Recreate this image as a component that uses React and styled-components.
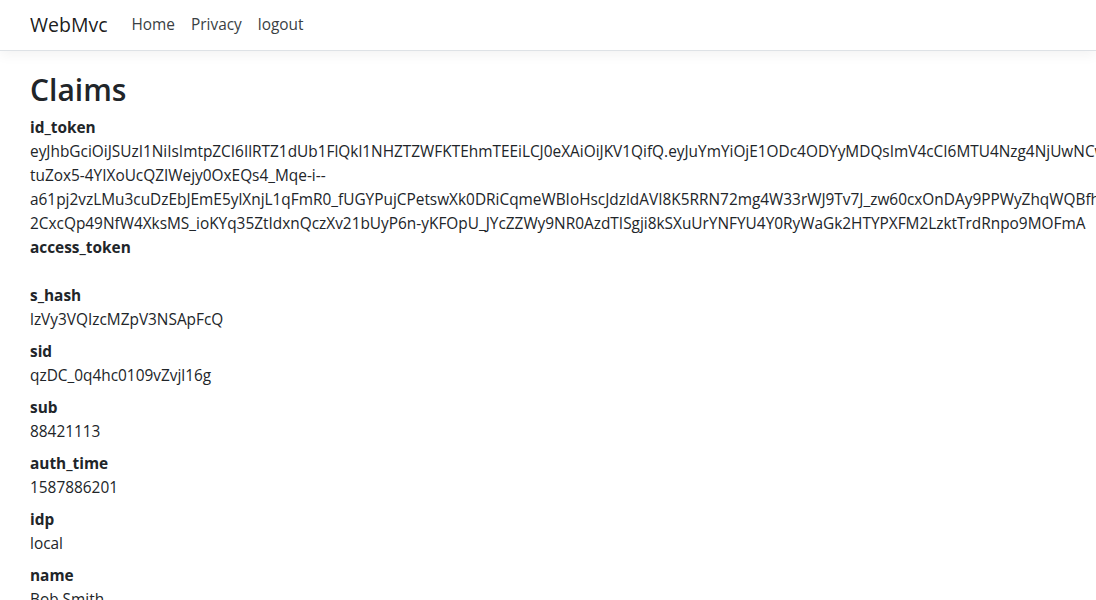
import styled, { createGlobalStyle } from "styled-components"

const GlobalStyle = createGlobalStyle`
  html, body {
    margin: 0;
    overflow: hidden;
    background: #fff;
  }
  body {
    font-family: "Open Sans", "Noto Sans", sans-serif;
    font-size: 15.4px;
    line-height: 24px;
    color: #212529;
  }
`

const claims = [
  {
    type: "id_token",
    lines: [
      "eyJhbGciOiJSUzI1NiIsImtpZCI6IlRTZ1dUb1FlQkl1NHZTZWFKTEhmTEEiLCJ0eXAiOiJKV1QifQ.eyJuYmYiOjE1ODc4ODYyMDQsImV4cCI6MTU4Nzg4NjUwNCwiaXNzIjoiaHR0cHM6Ly9sb2NhbGhvc3Q6NTAwMSIsImF1ZCI6Im12YyJ9",
      "tuZox5-4YIXoUcQZIWejy0OxEQs4_Mqe-i--",
      "a61pj2vzLMu3cuDzEbJEmE5ylXnjL1qFmR0_fUGYPujCPetswXk0DRiCqmeWBIoHscJdzldAVI8K5RRN72mg4W33rWJ9Tv7J_zw60cxOnDAy9PPWyZhqWQBfhQkW3nR2qLmV",
      "2CxcQp49NfW4XksMS_ioKYq35ZtIdxnQczXv21bUyP6n-yKFOpU_JYcZZWy9NR0AzdTISgji8kSXuUrYNFYU4Y0RyWaGk2HTYPXFM2LzktTrdRnpo9MOFmA",
    ],
    tight: true,
  },
  { type: "access_token", lines: [""], tight: true },
  { type: "s_hash", lines: ["lzVy3VQIzcMZpV3NSApFcQ"] },
  { type: "sid", lines: ["qzDC_0q4hc0109vZvjl16g"] },
  { type: "sub", lines: ["88421113"] },
  { type: "auth_time", lines: ["1587886201"] },
  { type: "idp", lines: ["local"] },
  { type: "name", lines: ["Bob Smith"] },
  { type: "website", lines: ["http://bob.com"] },
]

function App() {
  return (
    <>
      <GlobalStyle />
      <Header>
        <Navbar>
          <Brand href="#">WebMvc</Brand>
          <NavList>
            <NavItem><NavLink href="#">Home</NavLink></NavItem>
            <NavItem><NavLink href="#">Privacy</NavLink></NavItem>
            <NavItem><NavLink href="#">logout</NavLink></NavItem>
          </NavList>
        </Navbar>
      </Header>

      <Main>
        <Title>Claims</Title>
        <ClaimList>
          {claims.map((c) => (
            <div key={c.type}>
              <ClaimType>{c.type}</ClaimType>
              <ClaimValue $tight={c.tight}>
                {c.lines.map((l, i) => (
                  <ValueLine key={i}>{l}</ValueLine>
                ))}
              </ClaimValue>
            </div>
          ))}
        </ClaimList>
      </Main>
    </>
  )
}

export default App

const Header = styled.header`
  background: #fff;
  border-bottom: 1px solid #dee2e6;
  box-shadow: 0 4px 12px rgba(0, 0, 0, 0.05);
  margin-bottom: 21px;
`

const Navbar = styled.nav`
  display: flex;
  align-items: center;
  height: 50px;
  padding: 0 30px;
`

const Brand = styled.a`
  font-size: 19.5px;
  color: rgba(0, 0, 0, 0.9);
  text-decoration: none;
  margin-right: 16px;
  line-height: 30px;
`

const NavList = styled.ul`
  display: flex;
  list-style: none;
  margin: 0;
  padding: 0;
`

const NavItem = styled.li``

const NavLink = styled.a`
  display: block;
  padding: 8px 8px 8px;
  color: #3a3f44;
  text-decoration: none;
`

const Main = styled.main`
  padding: 0 30px;
`

const Title = styled.h1`
  font-size: 30px;
  font-weight: 600;
  line-height: 1.2;
  margin: 0 0 8px;
`

const ClaimList = styled.dl`
  margin: 0;
`

const ClaimType = styled.dt`
  font-weight: 700;
`

const ClaimValue = styled.dd`
  margin: 0 0 ${(p) => (p.$tight ? "0" : "8px")};
`

const ValueLine = styled.div`
  white-space: nowrap;
  min-height: 24px;
`
